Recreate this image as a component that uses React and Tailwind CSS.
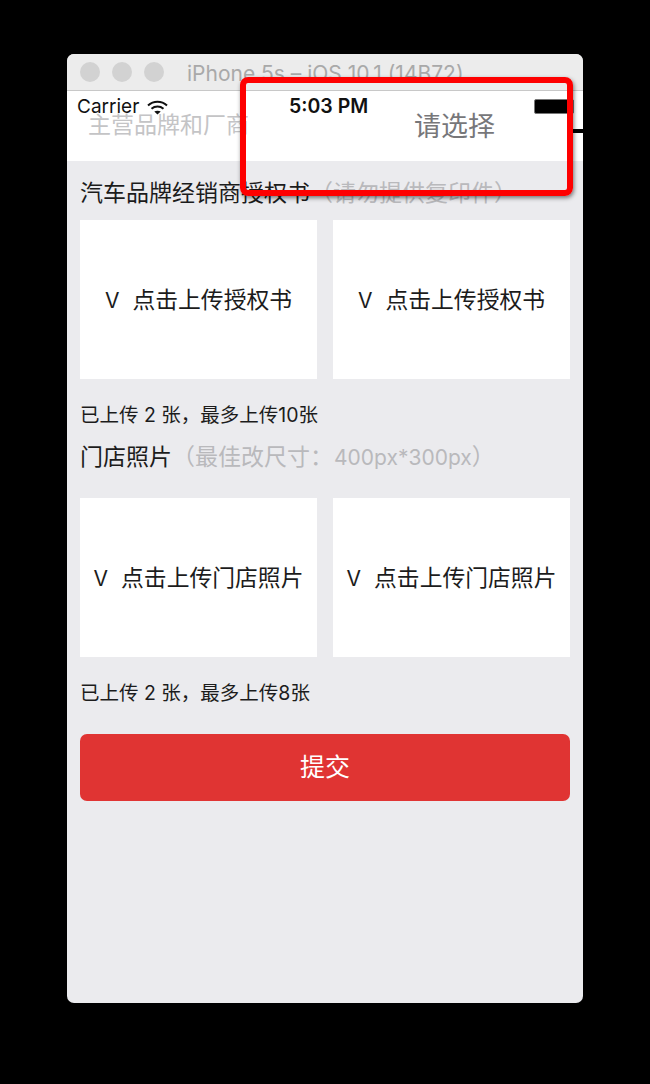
const cjk = { fontFamily: 'Inter, "Noto Sans CJK SC", sans-serif' };

function UploadBox({ label }) {
  return (
    <div className="flex h-[159px] w-[237px] items-center justify-center bg-white pt-[2px] text-[22.8px] text-[#1c1c1c]">
      <span className="mr-[13px] text-[21px]">V</span>
      <span>{label}</span>
    </div>
  );
}

function UploadSection({ title, hint, label, count, topClass, gapClass }) {
  return (
    <div className={topClass}>
      <div className="flex h-[38px] items-center pl-[13px] text-[23px] text-[#1c1c1c]">
        <span>{title}</span>
        <span className="text-[#b9b9bc]">{hint}</span>
      </div>
      <div className={`flex gap-[16px] pl-[13px] ${gapClass}`}>
        <UploadBox label={label} />
        <UploadBox label={label} />
      </div>
      <div className="mt-[24px] h-[24px] pl-[13px] text-[19.5px] leading-[24px] text-[#1c1c1c]">{count}</div>
    </div>
  );
}

export default function App() {
  return (
    <div className="relative h-[1084px] w-[650px] overflow-hidden bg-black pt-[54px]" style={cjk}>
      <div className="ml-[67px] flex h-[949px] w-[516px] flex-col overflow-hidden rounded-[7px] bg-[#ebebee]">
        {/* simulator title bar */}
        <div className="flex h-[37px] shrink-0 items-center border-b border-[#c8c8c8] bg-[#ececec] pl-[13px]">
          <div className="flex gap-[12px]">
            <span className="h-[20px] w-[20px] rounded-full bg-[#d2d2d2]" />
            <span className="h-[20px] w-[20px] rounded-full bg-[#d2d2d2]" />
            <span className="h-[20px] w-[20px] rounded-full bg-[#d2d2d2]" />
          </div>
          <span className="ml-[23px] mt-[3px] whitespace-nowrap text-[21px] text-[#a9a9a9]">iPhone 5s – iOS 10.1 (14B72)</span>
        </div>

        {/* status bar + brand row */}
        <div className="relative h-[70px] shrink-0 bg-white">
          <div className="flex h-[32px] items-center pl-[10px] text-[19px] text-[#111]">
            <span className="w-[62px]">Carrier</span>
            <svg className="ml-[8px]" width="21" height="15" viewBox="0 0 21 15" fill="none" stroke="#111" strokeWidth="2">
              <path d="M1 5.5C6.5 0.5 14.5 0.5 20 5.5" />
              <path d="M4.5 8.8C8 5.8 13 5.8 16.5 8.8" />
              <path d="M10.5 14.5L7.3 11.6C9 10.4 12 10.4 13.7 11.6Z" fill="#111" stroke="none" />
            </svg>
            <span className="ml-[121px] w-[78px] whitespace-nowrap text-[19.5px] font-semibold">5:03 PM</span>
            <span className="mb-[2px] ml-[167px] h-[15px] w-[40px] shrink-0 rounded-[2px] border border-[#777] bg-black" />
          </div>
          <div className="mt-[-16px] flex items-center pl-[21px] text-[23px]">
            <span className="mb-[4px] w-[326px] text-[#c4c4c6]">主营品牌和厂商</span>
            <span className="w-[90px] text-[27px] text-[#77777a]">请选择</span>
            <span className="ml-[69px] mt-[8px] h-[4px] w-[10px] bg-black" />
          </div>
        </div>

        <UploadSection topClass="mt-[13px]" gapClass="mt-[8px]" title="汽车品牌经销商授权书" hint="（请勿提供复印件）" label="点击上传授权书" count="已上传 2 张，最多上传10张" />
        <UploadSection
          topClass="mt-[11px]"
          gapClass="mt-[22px]"
          title="门店照片"
          hint={<>（最佳改尺寸：<span className="ml-[1px] text-[21px]">400px*300px</span>）</>}
          label="点击上传门店照片"
          count="已上传 2 张，最多上传8张"
        />

        <button className="mx-[13px] mt-[29px] h-[67px] shrink-0 rounded-[7px] bg-[#e03433] text-[25px] text-white">提交</button>
      </div>

      {/* red annotation drawn over the screenshot */}
      <div className="absolute left-[240px] top-[77px] h-[119px] w-[333px] rounded-[8px] border-[6px] border-[#fe0000] shadow-[1px_2px_4px_rgba(0,0,0,0.5)]" />
    </div>
  );
}
